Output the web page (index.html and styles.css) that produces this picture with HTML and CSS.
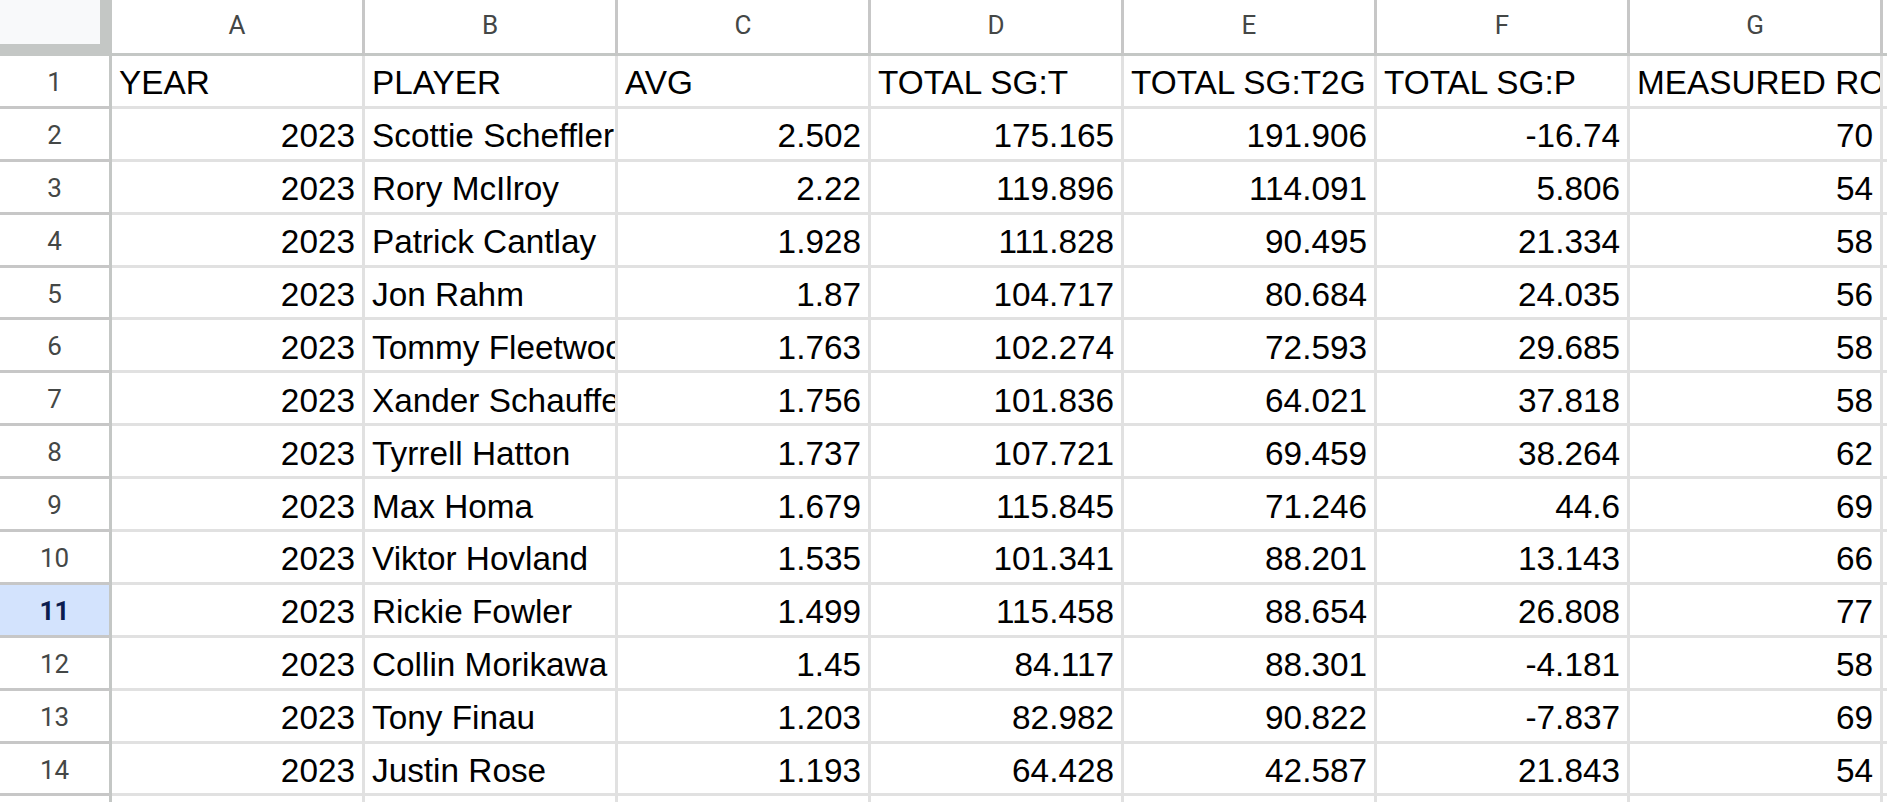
FILE: index.html
```html
<!DOCTYPE html>
<html>
<head>
<meta charset="utf-8">
<link rel="stylesheet" href="styles.css">
</head>
<body>
<div class="sheet">
  <div class="corner"></div>
  <div class="ch">A</div><div class="ch">B</div><div class="ch">C</div><div class="ch">D</div><div class="ch">E</div><div class="ch">F</div><div class="ch">G</div><div class="ch">H</div>

  <div class="rh">1</div>
  <div class="c">YEAR</div><div class="c">PLAYER</div><div class="c">AVG</div><div class="c">TOTAL SG:T</div><div class="c">TOTAL SG:T2G</div><div class="c">TOTAL SG:P</div><div class="c">MEASURED ROUNDS</div><div class="c">POINTS</div>

  <div class="rh">2</div>
  <div class="c n">2023</div><div class="c">Scottie Scheffler</div><div class="c n">2.502</div><div class="c n">175.165</div><div class="c n">191.906</div><div class="c n">-16.74</div><div class="c n">70</div><div class="c"></div>

  <div class="rh">3</div>
  <div class="c n">2023</div><div class="c">Rory McIlroy</div><div class="c n">2.22</div><div class="c n">119.896</div><div class="c n">114.091</div><div class="c n">5.806</div><div class="c n">54</div><div class="c"></div>

  <div class="rh">4</div>
  <div class="c n">2023</div><div class="c">Patrick Cantlay</div><div class="c n">1.928</div><div class="c n">111.828</div><div class="c n">90.495</div><div class="c n">21.334</div><div class="c n">58</div><div class="c"></div>

  <div class="rh">5</div>
  <div class="c n">2023</div><div class="c">Jon Rahm</div><div class="c n">1.87</div><div class="c n">104.717</div><div class="c n">80.684</div><div class="c n">24.035</div><div class="c n">56</div><div class="c"></div>

  <div class="rh">6</div>
  <div class="c n">2023</div><div class="c">Tommy Fleetwood</div><div class="c n">1.763</div><div class="c n">102.274</div><div class="c n">72.593</div><div class="c n">29.685</div><div class="c n">58</div><div class="c"></div>

  <div class="rh">7</div>
  <div class="c n">2023</div><div class="c">Xander Schauffele</div><div class="c n">1.756</div><div class="c n">101.836</div><div class="c n">64.021</div><div class="c n">37.818</div><div class="c n">58</div><div class="c"></div>

  <div class="rh">8</div>
  <div class="c n">2023</div><div class="c">Tyrrell Hatton</div><div class="c n">1.737</div><div class="c n">107.721</div><div class="c n">69.459</div><div class="c n">38.264</div><div class="c n">62</div><div class="c"></div>

  <div class="rh">9</div>
  <div class="c n">2023</div><div class="c">Max Homa</div><div class="c n">1.679</div><div class="c n">115.845</div><div class="c n">71.246</div><div class="c n">44.6</div><div class="c n">69</div><div class="c"></div>

  <div class="rh">10</div>
  <div class="c n">2023</div><div class="c">Viktor Hovland</div><div class="c n">1.535</div><div class="c n">101.341</div><div class="c n">88.201</div><div class="c n">13.143</div><div class="c n">66</div><div class="c"></div>

  <div class="rh sel">11</div>
  <div class="c n">2023</div><div class="c">Rickie Fowler</div><div class="c n">1.499</div><div class="c n">115.458</div><div class="c n">88.654</div><div class="c n">26.808</div><div class="c n">77</div><div class="c"></div>

  <div class="rh">12</div>
  <div class="c n">2023</div><div class="c">Collin Morikawa</div><div class="c n">1.45</div><div class="c n">84.117</div><div class="c n">88.301</div><div class="c n">-4.181</div><div class="c n">58</div><div class="c"></div>

  <div class="rh">13</div>
  <div class="c n">2023</div><div class="c">Tony Finau</div><div class="c n">1.203</div><div class="c n">82.982</div><div class="c n">90.822</div><div class="c n">-7.837</div><div class="c n">69</div><div class="c"></div>

  <div class="rh">14</div>
  <div class="c n">2023</div><div class="c">Justin Rose</div><div class="c n">1.193</div><div class="c n">64.428</div><div class="c n">42.587</div><div class="c n">21.843</div><div class="c n">54</div><div class="c"></div>

  <div class="rh">15</div>
  <div class="c n"></div><div class="c"></div><div class="c n"></div><div class="c n"></div><div class="c n"></div><div class="c n"></div><div class="c n"></div><div class="c"></div>
</div>
</body>
</html>
```
FILE: styles.css
```css
html, body {
  margin: 0;
  padding: 0;
  background: #ffffff;
  overflow: hidden;
}

.sheet {
  display: grid;
  grid-template-columns: 112px repeat(8, 253px);
  grid-template-rows: 56px repeat(15, 52.9px);
  width: 1887px;
  height: 802px;
  overflow: hidden;
}

.corner {
  box-sizing: border-box;
  background: #f8f9fa;
  border-right: 12px solid #c4c7c5;
  border-bottom: 12px solid #c4c7c5;
}

.ch {
  box-sizing: border-box;
  background: #ffffff;
  border-right: 3px solid #c7c7c7;
  border-bottom: 3px solid #c4c7c5;
  font-family: Roboto, "Liberation Sans", Arial, sans-serif;
  font-size: 26px;
  color: #444746;
  display: flex;
  align-items: center;
  justify-content: center;
  padding-bottom: 4px;
}

.rh {
  box-sizing: border-box;
  background: #ffffff;
  border-right: 3px solid #c4c7c5;
  border-bottom: 3px solid #c7c7c7;
  font-family: Roboto, "Liberation Sans", Arial, sans-serif;
  font-size: 26px;
  color: #444746;
  display: flex;
  align-items: center;
  justify-content: center;
  padding-top: 2px;
}

.rh.sel {
  background: #d3e3fd;
  color: #0b1d4f;
  font-weight: bold;
}

.c {
  box-sizing: border-box;
  background: #ffffff;
  border-right: 3px solid #e1e1e1;
  border-bottom: 3px solid #e1e1e1;
  font-family: "Liberation Sans", Arial, sans-serif;
  font-size: 33.33px;
  color: #000000;
  display: flex;
  align-items: flex-end;
  justify-content: flex-start;
  padding: 0 7px 3.5px 7px;
  white-space: nowrap;
  overflow: hidden;
}

.c.n {
  justify-content: flex-end;
}
```
